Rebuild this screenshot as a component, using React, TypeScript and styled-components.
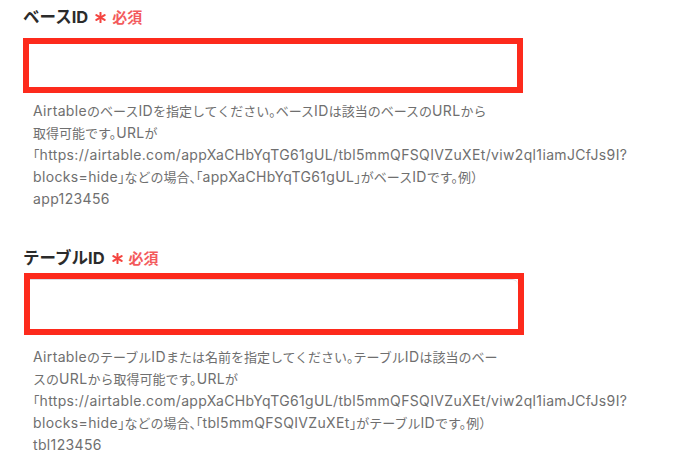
import React from "react";
import styled, { createGlobalStyle } from "styled-components";

const Global = createGlobalStyle`
  html, body { margin: 0; padding: 0; background: #ffffff; }
  body { font-family: "Inter", "Noto Sans CJK JP", sans-serif; }
`;

const Page = styled.div`
  display: flex;
  flex-direction: column;
  padding: 4px 0 0 23px;
  width: 694px;
  height: 463px;
  box-sizing: border-box;
  overflow: hidden;
`;

const Field = styled.section<{ $gapTop: number }>`
  display: flex;
  flex-direction: column;
  margin-top: ${(p) => p.$gapTop}px;
`;

const Label = styled.div<{ $after: number }>`
  display: flex;
  align-items: center;
  height: 24px;
  margin-bottom: ${(p) => p.$after}px;
  font-size: 16.5px;
  font-weight: 700;
  color: #2b2b2b;
`;

const Required = styled.span`
  display: inline-flex;
  align-items: center;
  margin-left: 7px;
  color: #f35a5c;
  font-family: "Noto Sans CJK JP", sans-serif;
  font-size: 15px;
  font-weight: 700;
`;

const Star = styled.svg`
  width: 11px;
  height: 11px;
  margin-right: 6px;
  margin-top: 3px;
`;

const Highlight = styled.div<{ $w: number; $h: number; $shift: number }>`
  width: ${(p) => p.$w}px;
  height: ${(p) => p.$h}px;
  margin-left: ${(p) => p.$shift}px;
  box-sizing: border-box;
  border: 6px solid #fd2a1c;
  background: #ffffff;
  display: flex;
`;

const Input = styled.input<{ $edge: boolean }>`
  flex: 1;
  min-width: 0;
  border: none;
  outline: none;
  background: #ffffff;
  border-top: ${(p) => (p.$edge ? "1px solid #dcdce4" : "none")};
  border-top-right-radius: ${(p) => (p.$edge ? "6px" : "0")};
  margin: 0;
  padding: 0 10px;
  font-family: inherit;
  font-size: 13px;
`;

const Help = styled.div<{ $top: number }>`
  display: flex;
  flex-direction: column;
  margin: ${(p) => p.$top}px 0 0 10px;
  font-family: "Noto Sans CJK JP", sans-serif;
  font-size: 13px;
  font-feature-settings: "halt";
  color: #6f6f6f;
`;

const HelpLine = styled.div`
  height: 22px;
  line-height: 22px;
  white-space: nowrap;
`;

const Latin = styled.span`
  font-family: "Inter", sans-serif;
  font-size: 14px;
  letter-spacing: 0.35px;
  line-height: 1;
`;

const fields = [
  {
    label: "ベースID",
    gapTop: 0,
    labelAfter: 10,
    w: 500,
    h: 55,
    shift: 0,
    edge: false,
    helpTop: 7,
    lines: [
      "AirtableのベースIDを指定してください。ベースIDは該当のベースのURLから",
      "取得可能です。URLが",
      "「https://airtable.com/appXaCHbYqTG61gUL/tbl5mmQFSQIVZuXEt/viw2ql1iamJCfJs9I?",
      "blocks=hide」などの場合、「appXaCHbYqTG61gUL」がベースIDです。例）",
      "app123456",
    ],
  },
  {
    label: "テーブルID",
    gapTop: 35,
    labelAfter: 4,
    w: 500,
    h: 62,
    shift: 1,
    edge: true,
    helpTop: 11,
    lines: [
      "AirtableのテーブルIDまたは名前を指定してください。テーブルIDは該当のベー",
      "スのURLから取得可能です。URLが",
      "「https://airtable.com/appXaCHbYqTG61gUL/tbl5mmQFSQIVZuXEt/viw2ql1iamJCfJs9I?",
      "blocks=hide」などの場合、「tbl5mmQFSQIVZuXEt」がテーブルIDです。例）",
      "tbl123456",
    ],
  },
];

function Asterisk() {
  return (
    <Star viewBox="0 0 12 12" aria-hidden="true">
      <g stroke="#f4443f" strokeWidth="2.2" strokeLinecap="round">
        <line x1="6" y1="0.8" x2="6" y2="11.2" />
        <line x1="1.5" y1="3.4" x2="10.5" y2="8.6" />
        <line x1="1.5" y1="8.6" x2="10.5" y2="3.4" />
      </g>
    </Star>
  );
}

function Mixed({ text }: { text: string }) {
  const parts = text.split(/([\x21-\x7E]+)/);
  return (
    <>
      {parts.map((p, i) =>
        i % 2 === 1 ? <Latin key={i}>{p}</Latin> : <React.Fragment key={i}>{p}</React.Fragment>
      )}
    </>
  );
}

export default function App() {
  return (
    <>
      <Global />
      <Page>
        {fields.map((f) => (
          <Field key={f.label} $gapTop={f.gapTop}>
            <Label $after={f.labelAfter}>
              {f.label}
              <Required>
                <Asterisk />
                必須
              </Required>
            </Label>
            <Highlight $w={f.w} $h={f.h} $shift={f.shift}>
              <Input $edge={f.edge} aria-label={f.label} />
            </Highlight>
            <Help $top={f.helpTop}>
              {f.lines.map((l, i) => (
                <HelpLine key={i}>
                  <Mixed text={l} />
                </HelpLine>
              ))}
            </Help>
          </Field>
        ))}
      </Page>
    </>
  );
}
